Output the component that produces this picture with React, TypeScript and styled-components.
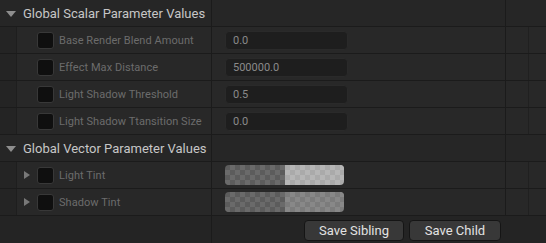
import React from "react";
import styled, { createGlobalStyle } from "styled-components";

const Global = createGlobalStyle`
  html, body { margin: 0; padding: 0; background: #242424; }
  body { font-family: Roboto, "Noto Sans", sans-serif; }
  * { box-sizing: border-box; }
`;

const Panel = styled.div`
  width: 546px;
  height: 243px;
  background: #242424;
  display: flex;
  flex-direction: column;
  overflow: hidden;
`;

const Row = styled.div<{ $header?: boolean }>`
  display: flex;
  height: 27px;
  border-bottom: 1px solid #1b1b1b;
  background: ${(p) => (p.$header ? "#262626" : "#282828")};
`;

const NameCell = styled.div`
  width: 212px;
  border-right: 1px solid #1b1b1b;
  display: flex;
  align-items: center;
`;

const ValueCell = styled.div`
  width: 294px;
  border-right: 1px solid #1b1b1b;
  display: flex;
  align-items: center;
  padding-left: 13px;
`;

const ExtraCell = styled.div`
  flex: 1;
  display: flex;
`;

const ExtraPart = styled.div<{ $line?: boolean }>`
  width: 23px;
  border-right: ${(p) => (p.$line ? "1px solid #202020" : "none")};
`;

const Indent = styled.div`
  width: 17px;
  align-self: stretch;
  background: #242424;
  border-right: 1px solid #1e1e1e;
`;

const HeaderTitle = styled.span`
  color: #c6c6c6;
  font-size: 13px;
  margin-left: 7px;
  white-space: nowrap;
`;

const DownArrow = styled.span`
  width: 0;
  height: 0;
  margin-left: 6px;
  margin-top: 1px;
  border-left: 5px solid transparent;
  border-right: 5px solid transparent;
  border-top: 6px solid #8e8e8e;
`;

const ArrowSlot = styled.div`
  width: 20px;
  display: flex;
  align-items: center;
  padding-left: 7px;
`;

const RightArrow = styled.span`
  width: 0;
  height: 0;
  border-top: 4px solid transparent;
  border-bottom: 4px solid transparent;
  border-left: 6px solid #787878;
`;

const Check = styled.div`
  width: 17px;
  height: 17px;
  border-radius: 3px;
  background: #0f0f0f;
  border: 1px solid #383838;
  margin-right: 5px;
`;

const Label = styled.span`
  color: #6c6c6c;
  font-size: 11px;
  letter-spacing: 0.05px;
  white-space: nowrap;
`;

const NumInput = styled.div`
  width: 123px;
  height: 19px;
  background: #1e1e1e;
  border: 1px solid #2a2a2a;
  border-radius: 4px;
  color: #8a8a8a;
  font-size: 11px;
  display: flex;
  align-items: center;
  padding-left: 7px;
`;

const Swatch = styled.div`
  width: 119px;
  height: 20px;
  border-radius: 4px;
  overflow: hidden;
  display: flex;
`;

const SwatchHalf = styled.div<{ $a: string; $b: string }>`
  flex: 1;
  background-color: ${(p) => p.$a};
  background-image: linear-gradient(45deg, ${(p) => p.$b} 25%, transparent 25%, transparent 75%, ${(p) => p.$b} 75%),
    linear-gradient(45deg, ${(p) => p.$b} 25%, transparent 25%, transparent 75%, ${(p) => p.$b} 75%);
  background-size: 10px 10px;
  background-position: 0 0, 5px 5px;
`;

const Footer = styled.div`
  display: flex;
  height: 27px;
`;

const FooterLeft = styled.div`
  width: 212px;
  border-right: 1px solid #1b1b1b;
`;

const FooterRight = styled.div`
  flex: 1;
  display: flex;
  gap: 5px;
  padding: 4px 0 0 92px;
`;

const Button = styled.button<{ $w: number }>`
  width: ${(p) => p.$w}px;
  height: 21px;
  background: #383838;
  border: 1px solid #151515;
  border-radius: 4px;
  color: #e2e2e2;
  font-family: Roboto, "Noto Sans", sans-serif;
  font-size: 13px;
  padding: 0;
  display: flex;
  align-items: center;
  justify-content: center;
`;

const scalars = [
  ["Base Render Blend Amount", "0.0"],
  ["Effect Max Distance", "500000.0"],
  ["Light Shadow Threshold", "0.5"],
  ["Light Shadow Ttansition Size", "0.0"],
];

const vectors: [string, string, string][] = [
  ["Light Tint", "#aaaaaa", "#b6b6b6"],
  ["Shadow Tint", "#7c7c7c", "#888888"],
];

const Header = ({ title }: { title: string }) => (
  <Row $header>
    <NameCell>
      <DownArrow />
      <HeaderTitle>{title}</HeaderTitle>
    </NameCell>
    <ValueCell />
    <ExtraCell />
  </Row>
);

export default function App() {
  return (
    <Panel>
      <Global />
      <Header title="Global Scalar Parameter Values" />
      {scalars.map(([name, v]) => (
        <Row key={name}>
          <NameCell>
            <Indent />
            <ArrowSlot />
            <Check />
            <Label>{name}</Label>
          </NameCell>
          <ValueCell>
            <NumInput>{v}</NumInput>
          </ValueCell>
          <ExtraCell>
            <ExtraPart $line />
          </ExtraCell>
        </Row>
      ))}
      <Header title="Global Vector Parameter Values" />
      {vectors.map(([name, a, b]) => (
        <Row key={name}>
          <NameCell>
            <Indent />
            <ArrowSlot>
              <RightArrow />
            </ArrowSlot>
            <Check />
            <Label>{name}</Label>
          </NameCell>
          <ValueCell>
            <Swatch>
              <SwatchHalf $a="#5c5c5c" $b="#6a6a6a" />
              <SwatchHalf $a={a} $b={b} />
            </Swatch>
          </ValueCell>
          <ExtraCell>
            <ExtraPart $line />
          </ExtraCell>
        </Row>
      ))}
      <Footer>
        <FooterLeft />
        <FooterRight>
          <Button $w={100}>Save Sibling</Button>
          <Button $w={92}>Save Child</Button>
        </FooterRight>
      </Footer>
    </Panel>
  );
}
